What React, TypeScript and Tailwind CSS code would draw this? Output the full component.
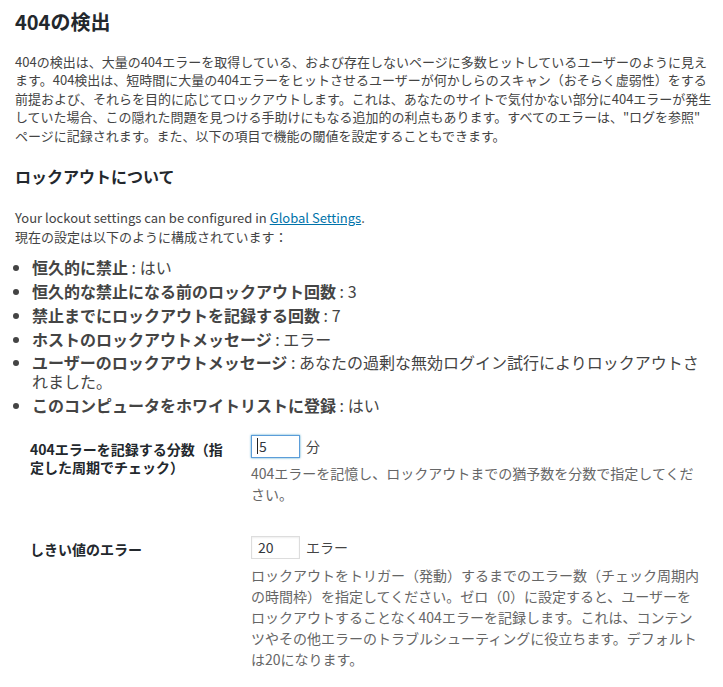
import React from "react";

const font = { fontFamily: '"Noto Sans CJK JP", "Noto Sans", sans-serif' };

function Item({ label, value }: { label: string; value: React.ReactNode }) {
  return (
    <li className="mb-[5.5px] leading-[18.4px]">
      <b className="font-bold">{label}</b> : {value}
    </li>
  );
}

export default function App() {
  return (
    <div className="min-h-[687px] w-[723px] bg-white text-[#444] pl-[15px] pt-[8px]" style={font}>
      <h1 className="text-[20px] leading-[28px] font-bold text-[#23282d]">404の検出</h1>
      <p className="mt-[17px] text-[13px] leading-[18.4px] whitespace-nowrap">
        404の検出は、大量の404エラーを取得している、および存在しないページに多数ヒットしているユーザーのように見え
        <br />
        ます。404検出は、短時間に大量の404エラーをヒットさせるユーザーが何かしらのスキャン（おそらく虚弱性）をする
        <br />
        前提および、それらを目的に応じてロックアウトします。これは、あなたのサイトで気付かない部分に404エラーが発生
        <br />
        していた場合、この隠れた問題を見つける手助けにもなる追加的の利点もあります。すべてのエラーは、"ログを参照"
        <br />
        ページに記録されます。また、以下の項目で機能の閾値を設定することもできます。
      </p>
      <h2 className="mt-[19.5px] text-[16px] leading-[22px] font-bold text-[#23282d]">ロックアウトについて</h2>
      <p className="mt-[21px] text-[13px] leading-[19px]">
        Your lockout settings can be configured in{" "}
        <a className="text-[#0073aa] underline" href="#">
          Global Settings
        </a>
        .
        <br />
        現在の設定は以下のように構成されています：
      </p>
      <ul className="mt-[12.3px] list-disc pl-[17px] text-[16px] pr-[20px]">
        <Item label="恒久的に禁止" value="はい" />
        <Item label="恒久的な禁止になる前のロックアウト回数" value="3" />
        <Item label="禁止までにロックアウトを記録する回数" value="7" />
        <Item label="ホストのロックアウトメッセージ" value="エラー" />
        <Item label="ユーザーのロックアウトメッセージ" value="あなたの過剰な無効ログイン試行によりロックアウトされました。" />
        <Item label="このコンピュータをホワイトリストに登録" value="はい" />
      </ul>

      <div className="mt-[20.5px] flex pl-[15px]">
        <div className="w-[200px] mt-[5px] text-[14px] leading-[18.4px] font-bold text-[#23282d]">
          404エラーを記録する分数（指定した周期でチェック）
        </div>
        <div className="ml-[21px]">
          <div className="flex items-center gap-[6px] text-[14px] text-[#444]">
            <div className="h-[23px] w-[49px] border border-[#5b9dd9] shadow-[0_0_2px_rgba(30,140,190,0.8)] bg-white flex items-center pl-[5px] text-[14px] text-[#32373c]">
              <span className="inline-block w-px h-[16px] bg-[#222] mr-[1px]" />
              5
            </div>
            <span>分</span>
          </div>
          <p className="mt-[5.5px] text-[14px] leading-[21px] text-[#666] whitespace-nowrap">
            404エラーを記憶し、ロックアウトまでの猶予数を分数で指定してくだ
            <br />
            さい。
          </p>
        </div>
      </div>

      <div className="mt-[30.5px] flex pl-[15px]">
        <div className="w-[200px] mt-[4px] text-[14px] leading-[18.4px] font-bold text-[#23282d]">
          しきい値のエラー
        </div>
        <div className="ml-[21px]">
          <div className="flex items-center gap-[6px] text-[14px] text-[#444]">
            <div className="h-[23px] w-[49px] border border-[#ddd] shadow-[inset_0_1px_2px_rgba(0,0,0,0.07)] bg-white flex items-center pl-[6px] text-[14px] text-[#32373c]">
              20
            </div>
            <span>エラー</span>
          </div>
          <p className="mt-[6.5px] text-[14px] leading-[21px] text-[#666] whitespace-nowrap">
            ロックアウトをトリガー（発動）するまでのエラー数（チェック周期内
            <br />
            の時間枠）を指定してください。ゼロ（0）に設定すると、ユーザーを
            <br />
            ロックアウトすることなく404エラーを記録します。これは、コンテン
            <br />
            ツやその他エラーのトラブルシューティングに役立ちます。デフォルト
            <br />
            は20になります。
          </p>
        </div>
      </div>
    </div>
  );
}
